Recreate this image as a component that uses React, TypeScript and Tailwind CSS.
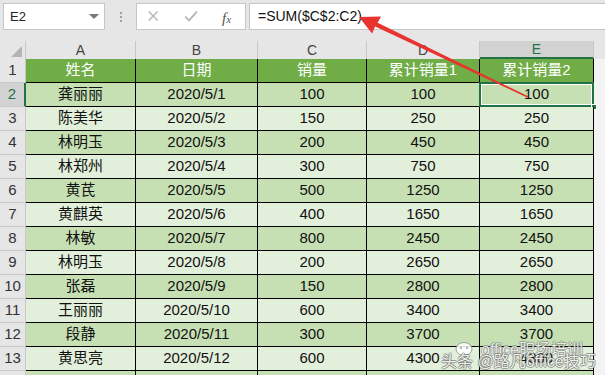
import React from "react";

const rows: [string, string, string, string, string][] = [
  ["龚丽丽", "2020/5/1", "100", "100", "100"],
  ["陈美华", "2020/5/2", "150", "250", "250"],
  ["林明玉", "2020/5/3", "200", "450", "450"],
  ["林郑州", "2020/5/4", "300", "750", "750"],
  ["黄芪", "2020/5/5", "500", "1250", "1250"],
  ["黄麒英", "2020/5/6", "400", "1650", "1650"],
  ["林敏", "2020/5/7", "800", "2450", "2450"],
  ["林明玉", "2020/5/8", "200", "2650", "2650"],
  ["张磊", "2020/5/9", "150", "2800", "2800"],
  ["王丽丽", "2020/5/10", "600", "3400", "3400"],
  ["段静", "2020/5/11", "300", "3700", "3700"],
  ["黄思亮", "2020/5/12", "600", "4300", "4300"],
  ["", "", "", "", ""],
];

const widths = ["w-[110px]", "w-[122px]", "w-[109px]", "w-[113px]", "w-[114px]"];
const font = "font-['Liberation_Sans','Noto_Sans_CJK_SC',sans-serif]";

export default function App() {
  return (
    <div className={`relative w-[605px] h-[375px] overflow-hidden bg-[#e6e6e6] ${font}`}>
      {/* toolbar */}
      <div className="h-[41px] flex items-start pt-[3px]">
        <div className="ml-[3px] w-[102px] h-[27px] bg-white border border-[#c6c6c6] flex items-center pl-[6px] pr-[5px] text-[13px] text-[#222]">
          <span>E2</span>
          <div className="ml-auto w-0 h-0 border-l-[5px] border-r-[5px] border-t-[5px] border-l-transparent border-r-transparent border-t-[#777]" />
        </div>
        <div className="w-[31px] h-[27px] flex flex-col items-center justify-center gap-[2px]">
          <div className="w-[2px] h-[2px] bg-[#a0a0a0]" />
          <div className="w-[2px] h-[2px] bg-[#a0a0a0]" />
          <div className="w-[2px] h-[2px] bg-[#a0a0a0]" />
        </div>
        <div className="relative w-[110px] h-[27px] bg-white border border-[#c6c6c6] flex items-center">
          <svg width="110" height="25" viewBox="0 0 110 25">
            <path d="M12 7.5 L21 16.5 M21 7.5 L12 16.5" stroke="#b5b5b5" strokeWidth="1.4" fill="none" />
            <path d="M49 12.5 L53 16.5 L61 7.5" stroke="#b5b5b5" strokeWidth="1.8" fill="none" />
          </svg>
          <div className="absolute left-[85px] top-[3px] text-[15px] italic text-[#555] font-['Liberation_Serif',serif]">
            f<span className="text-[11px]">x</span>
          </div>
        </div>
        <div className="ml-[3px] flex-1 h-[27px] bg-white border border-[#c6c6c6] border-r-0 flex items-center pl-[8px] text-[14px] text-[#111]">
          =SUM($C$2:C2)
        </div>
      </div>

      {/* column letters */}
      <div className="flex h-[18px] text-[14px] text-[#444]">
        <div className="relative w-[26px] border-r border-[#c8c8c8]">
          <svg className="absolute right-[3px] bottom-[2px]" width="11" height="11" viewBox="0 0 11 11">
            <polygon points="11,0 11,11 0,11" fill="#b4b4b4" />
          </svg>
        </div>
        {["A", "B", "C", "D", "E"].map((l, i) => (
          <div
            key={l}
            className={`${widths[i]} flex items-center justify-center ${
              i === 4
                ? "bg-[#d2d2d2] text-[#217346] border-b-2 border-b-[#217346] border-r border-r-[#c8c8c8]"
                : "border-r border-[#c8c8c8]"
            }`}
          >
            {l}
          </div>
        ))}
        <div className="flex-1" />
      </div>

      {/* header row 1 */}
      <div className="flex h-[24px]">
        <div className="w-[26px] border-r border-b border-[#c8c8c8] flex items-center justify-center text-[15px] text-[#333]">
          1
        </div>
        {["姓名", "日期", "销量", "累计销量1", "累计销量2"].map((t, i) => (
          <div
            key={t}
            className={`${widths[i]} bg-[#70ad47] border-r border-b border-black flex items-center justify-center text-[15px] text-white`}
          >
            {t}
          </div>
        ))}
        <div className="flex-1 bg-[#f3f3f3]" />
      </div>

      {/* data rows */}
      {rows.map((r, ri) => {
        const n = ri + 2;
        const dark = n % 2 === 0;
        const sel = n === 2;
        return (
          <div key={n} className="flex h-[24px]">
            <div
              className={`w-[26px] border-b border-[#c8c8c8] flex items-center justify-center text-[15px] ${
                sel
                  ? "bg-[#d2d2d2] text-[#217346] border-r-2 border-r-[#217346]"
                  : "text-[#333] border-r border-r-[#c8c8c8]"
              }`}
            >
              {n < 14 ? n : ""}
            </div>
            {r.map((c, ci) => (
              <div
                key={ci}
                className={`relative ${widths[ci]} ${
                  dark ? "bg-[#c6e0b4]" : "bg-[#e2efda]"
                } border-r border-b border-black flex items-center justify-center text-[15px] text-[#111]`}
              >
                {c}
                {sel && ci === 4 && (
                  <>
                    <div className="absolute -left-[1px] -top-[1px] -right-[1px] -bottom-[1px] border-2 border-[#217346]">
                      <div className="w-full h-full border border-white" />
                    </div>
                    <div className="absolute -right-[4px] -bottom-[4px] w-[6px] h-[6px] bg-[#217346] border border-white" />
                  </>
                )}
              </div>
            ))}
            <div className="flex-1 bg-[#f3f3f3]" />
          </div>
        );
      })}

      {/* red arrow */}
      <svg className="absolute left-0 top-0 pointer-events-none" width="605" height="375" viewBox="0 0 605 375">
        <polygon
          points="359,17 381,16.5 377.6,22.8 528.2,96.3 527.6,97.7 375.2,26.6 372,33.5"
          fill="#e8332e"
        />
      </svg>

      {/* watermark */}
      <div className="absolute left-[455px] top-[338px] flex items-center text-[16px] text-[rgba(255,255,255,0.85)] [text-shadow:1px_0_0_rgba(90,90,90,0.45),-1px_0_0_rgba(90,90,90,0.45),0_1px_0_rgba(90,90,90,0.45),0_-1px_0_rgba(90,90,90,0.45)] pointer-events-none">
        <svg width="22" height="18" viewBox="0 0 22 18">
          <ellipse cx="9" cy="8" rx="8" ry="6.5" fill="rgba(255,255,255,0.85)" stroke="rgba(110,110,110,0.6)" />
          <circle cx="6" cy="7" r="1" fill="#999" />
          <circle cx="12" cy="7" r="1" fill="#999" />
        </svg>
        <span className="ml-[4px]">office职场培训</span>
      </div>
      <div className="absolute left-[441px] top-[350px] whitespace-nowrap text-[16px] text-[rgba(255,255,255,0.9)] [text-shadow:1px_0_0_rgba(80,80,80,0.5),-1px_0_0_rgba(80,80,80,0.5),0_1px_0_rgba(80,80,80,0.5),0_-1px_0_rgba(80,80,80,0.5)] pointer-events-none">
        头条 @路凡office技巧
      </div>
    </div>
  );
}
